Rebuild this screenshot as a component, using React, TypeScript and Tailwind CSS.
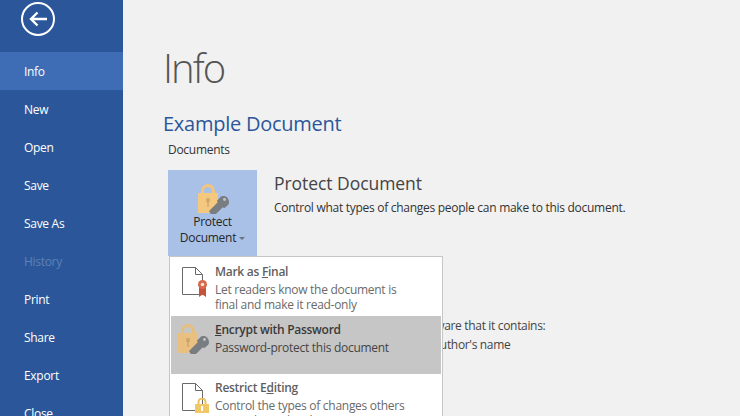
import React from 'react';

const navItems = ['Info', 'New', 'Open', 'Save', 'Save As', 'History', 'Print', 'Share', 'Export', 'Close'];

const LockKey = ({ faded }: { faded?: boolean }) => (
  <svg width="32" height="31" viewBox="0 0 32 31">
    <path d="M4.500 11V8a5.500 5.500 0 0 1 11 0v3" fill="none" stroke={faded ? '#e6bf7e' : '#f2c47c'} strokeWidth="3" />
    <rect x="0" y="10" width="20" height="20" rx="1" fill={faded ? '#e9c07f' : '#f5c87f'} />
    <circle cx="10" cy="17" r="2.200" fill="#b8965e" opacity="0.55" />
    <rect x="9.200" y="18" width="1.600" height="6" fill="#b8965e" opacity="0.55" />
    <path d="M11 28l8.500-8.500-.5-2 3-3c2-2 5.500-2 7.500.5s2 5.500 0 7.500l-3 2.500-2-.5-8.500 8.500-3-1.500z" fill="#797d82" />
    <circle cx="26.500" cy="16.500" r="1.400" fill="#c4c6c9" />
  </svg>
);

const DocIcon = ({ children }: { children: React.ReactNode }) => (
  <div className="relative w-[22px] h-[28px] ml-[1px]">
    <svg width="22" height="28" viewBox="0 0 22 28">
      <path d="M.5.5h13l7 7v20H.5z" fill="#fff" stroke="#6a6a6a" />
      <path d="M13.500.5v7h7" fill="none" stroke="#6a6a6a" />
    </svg>
    {children}
  </div>
);

const MenuRow = ({ icon, title, lines, active }: { icon: React.ReactNode; title: React.ReactNode; lines: string[]; active?: boolean }) => (
  <div className={`flex h-[58px] pl-[10px] pt-[5px] ${active ? 'bg-[#c6c6c6]' : ''}`}>
    <div className="w-[34px] pt-[4px] shrink-0">{icon}</div>
    <div className="tracking-[-0.28px]">
      <div className={`text-[12px] leading-[18px] font-semibold ${active ? 'text-[#3a3a3a]' : 'text-[#5f5f5f]'}`}>{title}</div>
      <div className="mt-[1px]">
        {lines.map(l => (
          <div key={l} className={`text-[12px] leading-[15px] ${active ? 'text-[#444444]' : 'text-[#6a6a6a]'}`}>{l}</div>
        ))}
      </div>
    </div>
  </div>
);

export default function App() {
  return (
    <div className="relative flex w-[740px] h-[416px] overflow-hidden bg-[#f1f1f1] font-['Open_Sans',sans-serif]">
      <nav className="w-[123px] shrink-0 bg-[#2b579a] text-white">
        <div className="h-[52px] pl-[20px] pt-[1px]">
          <svg width="36" height="36" viewBox="0 0 36 36">
            <circle cx="18" cy="18" r="16" fill="none" stroke="#fff" strokeWidth="2" />
            <path d="M27 18H11M17.500 11.500L11 18l6.500 6.500" fill="none" stroke="#fff" strokeWidth="2.400" />
          </svg>
        </div>
        {navItems.map(item => (
          <div
            key={item}
            className={`h-[38px] pl-[24px] pt-[2px] flex items-center text-[12px] tracking-[-0.3px] ${item === 'Info' ? 'bg-[#3e6db5]' : ''} ${item === 'History' ? 'text-[#5f80b5]' : ''}`}
          >
            {item}
          </div>
        ))}
      </nav>

      <main className="flex-1 pl-[40px]">
        <h1 className="mt-[38px] text-[40px] leading-[60px] font-light tracking-[-2px] text-[#555555]">Info</h1>
        <h2 className="mt-[12px] text-[20px] leading-[28px] tracking-[-0.25px] text-[#2b579a]">Example Document</h2>
        <div className="mt-[3px] ml-[5px] text-[12px] leading-[18px] tracking-[-0.28px] text-[#333333]">Documents</div>

        <div className="mt-[11px] ml-[5px] flex">
          <div className="w-[89px] h-[86px] bg-[#a9c1e6] flex flex-col items-center pt-[13px] text-[12px] leading-[16px] tracking-[-0.28px] text-[#262626]">
            <div className="ml-[2px]"><LockKey /></div>
            <div className="text-center">Protect</div>
            <div className="text-center flex items-center">
              Document
              <span className="ml-[3px] border-x-[3px] border-t-[3px] border-x-transparent border-t-[#6a7280]" />
            </div>
          </div>
          <div className="ml-[17px] mt-[1px]">
            <div className="text-[17.5px] leading-[24px] tracking-[-0.05px] text-[#444444]">Protect Document</div>
            <div className="mt-[4px] text-[12px] leading-[18px] tracking-[-0.28px] text-[#333333]">Control what types of changes people can make to this document.</div>
          </div>
        </div>

        <div className="mt-[60px] ml-[111px] text-[12px] leading-[19px] tracking-[-0.33px] text-[#444444]">
          <div>Before publishing this file, be aware that it contains:</div>
          <div className="pl-[20px]">Document properties and author's name</div>
        </div>
      </main>

      <div className="absolute left-[169px] top-[256px] w-[274px] h-[170px] bg-white border border-[#c6c6c6] p-[1px] pt-[1px]">
        <MenuRow
          icon={
            <DocIcon>
              <svg className="absolute left-[16px] top-[13px]" width="9" height="17" viewBox="0 0 9 17">
                <path d="M1 7v10l3.500-2.500L8 17V7z" fill="#c9533a" />
                <circle cx="4.500" cy="4.500" r="4.500" fill="#d8694e" />
                <circle cx="4.500" cy="4.500" r="1.800" fill="#f5e3d8" />
              </svg>
            </DocIcon>
          }
          title={<><span>Mark as </span><span className="underline">F</span><span>inal</span></>}
          lines={['Let readers know the document is', 'final and make it read-only']}
        />
        <MenuRow
          active
          icon={<div className="-ml-[3px] -mt-[2px]"><LockKey faded /></div>}
          title={<><span className="underline">E</span><span>ncrypt with Password</span></>}
          lines={['Password-protect this document']}
        />
        <MenuRow
          icon={
            <DocIcon>
              <svg className="absolute left-[13px] top-[15px]" width="14" height="15" viewBox="0 0 14 15">
                <path d="M3.500 6V4a3.500 3.500 0 0 1 7 0v2" fill="none" stroke="#eec15f" strokeWidth="2" />
                <rect x="0" y="6" width="14" height="9" fill="#f2c766" />
                <rect x="6" y="8" width="2" height="5" fill="#fff" />
              </svg>
            </DocIcon>
          }
          title={<><span>Restrict E</span><span className="underline">d</span><span>iting</span></>}
          lines={['Control the types of changes others', 'can make to this document']}
        />
      </div>
    </div>
  );
}
